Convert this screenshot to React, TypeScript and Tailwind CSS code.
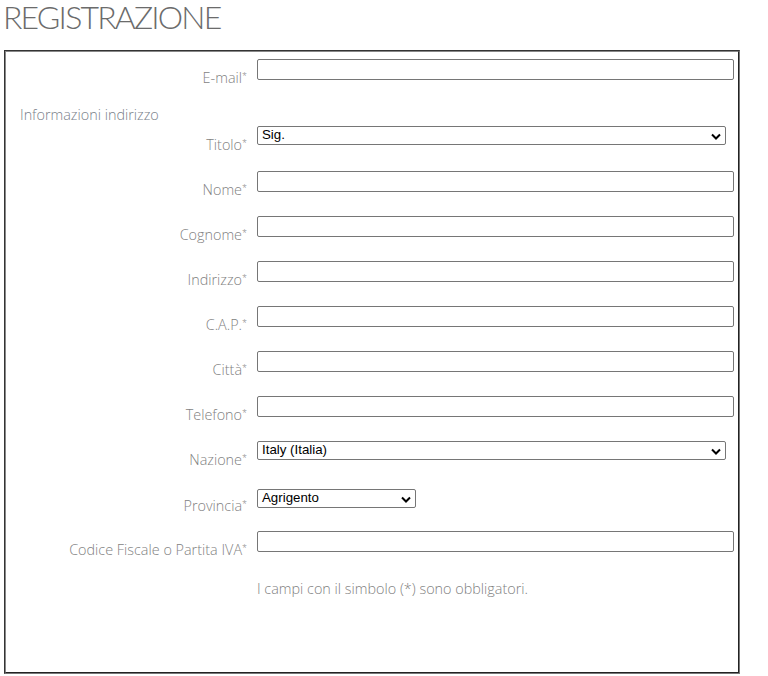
import React from 'react';

const rows = [
  { label: 'E-mail', kind: 'input' },
  { label: 'Titolo', kind: 'select', value: 'Sig.' },
  { label: 'Nome', kind: 'input' },
  { label: 'Cognome', kind: 'input' },
  { label: 'Indirizzo', kind: 'input' },
  { label: 'C.A.P.', kind: 'input' },
  { label: 'Città', kind: 'input' },
  { label: 'Telefono', kind: 'input' },
  { label: 'Nazione', kind: 'select', value: 'Italy (Italia)' },
  { label: 'Provincia', kind: 'small', value: 'Agrigento' },
  { label: 'Codice Fiscale o Partita IVA', kind: 'input' },
];

function Chevron() {
  return (
    <svg width="10" height="7" viewBox="0 0 10 7" className="absolute right-[4px] top-[6px]">
      <path d="M1 1.5 L5 5.5 L9 1.5" fill="none" stroke="#000" strokeWidth="2" />
    </svg>
  );
}

function Field({ kind, value }: { kind: string; value?: string }) {
  if (kind === 'input') {
    return <input type="text" className="h-[21px] w-[477px] rounded-[2px] border border-[#767676] bg-white px-1" />;
  }
  return (
    <div
      className={`relative h-[19px] rounded-[2px] border border-[#767676] bg-white pl-[4px] font-['Liberation_Sans',sans-serif] text-[13.3px] leading-[16px] text-black ${
        kind === 'small' ? 'w-[159px]' : 'w-[469px]'
      }`}
    >
      {value}
      <Chevron />
    </div>
  );
}

export default function App() {
  return (
    <div className="w-[768px] h-[676px] bg-white font-['Open_Sans',sans-serif] overflow-hidden">
      <h1 className="pt-[1px] pl-[3px] text-[32px] leading-[32px] font-light tracking-[-1.8px] text-[#6b6b6b] font-['Lato',sans-serif]">
        REGISTRAZIONE
      </h1>
      <div className="ml-[4px] mt-[17px] h-[624px] w-[736px] border-2 border-[#888] border-b-[#777] border-r-[#777] [border-style:groove]">
        <div className="pt-[7px]">
          {rows.map((r, i) => (
            <React.Fragment key={r.label}>
              {i === 1 && (
                <div className="h-[22px] pl-[14px] pt-[1px] text-[14.4px] leading-[20px] font-light text-[#7a7f8a]">
                  Informazioni indirizzo
                </div>
              )}
              <div className={`flex items-start ${r.kind === 'small' ? 'h-[42px]' : i === 8 ? 'h-[48px]' : 'h-[45px]'}`}>
                <div
                  className={`w-[251px] shrink-0 pr-[10px] text-right text-[14.4px] font-light text-[#7f7f7f] ${
                    r.kind === 'small' ? 'pt-[6px]' : 'pt-[8px]'
                  }`}
                >
                  {r.label}
                  <sup className="text-[9px]">*</sup>
                </div>
                <Field kind={r.kind} value={r.value} />
              </div>
            </React.Fragment>
          ))}
          <div className="pl-[251px] pt-[2px] text-[14.4px] font-light text-[#7f7f7f]">
            I campi con il simbolo (*) sono obbligatori.
          </div>
        </div>
      </div>
    </div>
  );
}
